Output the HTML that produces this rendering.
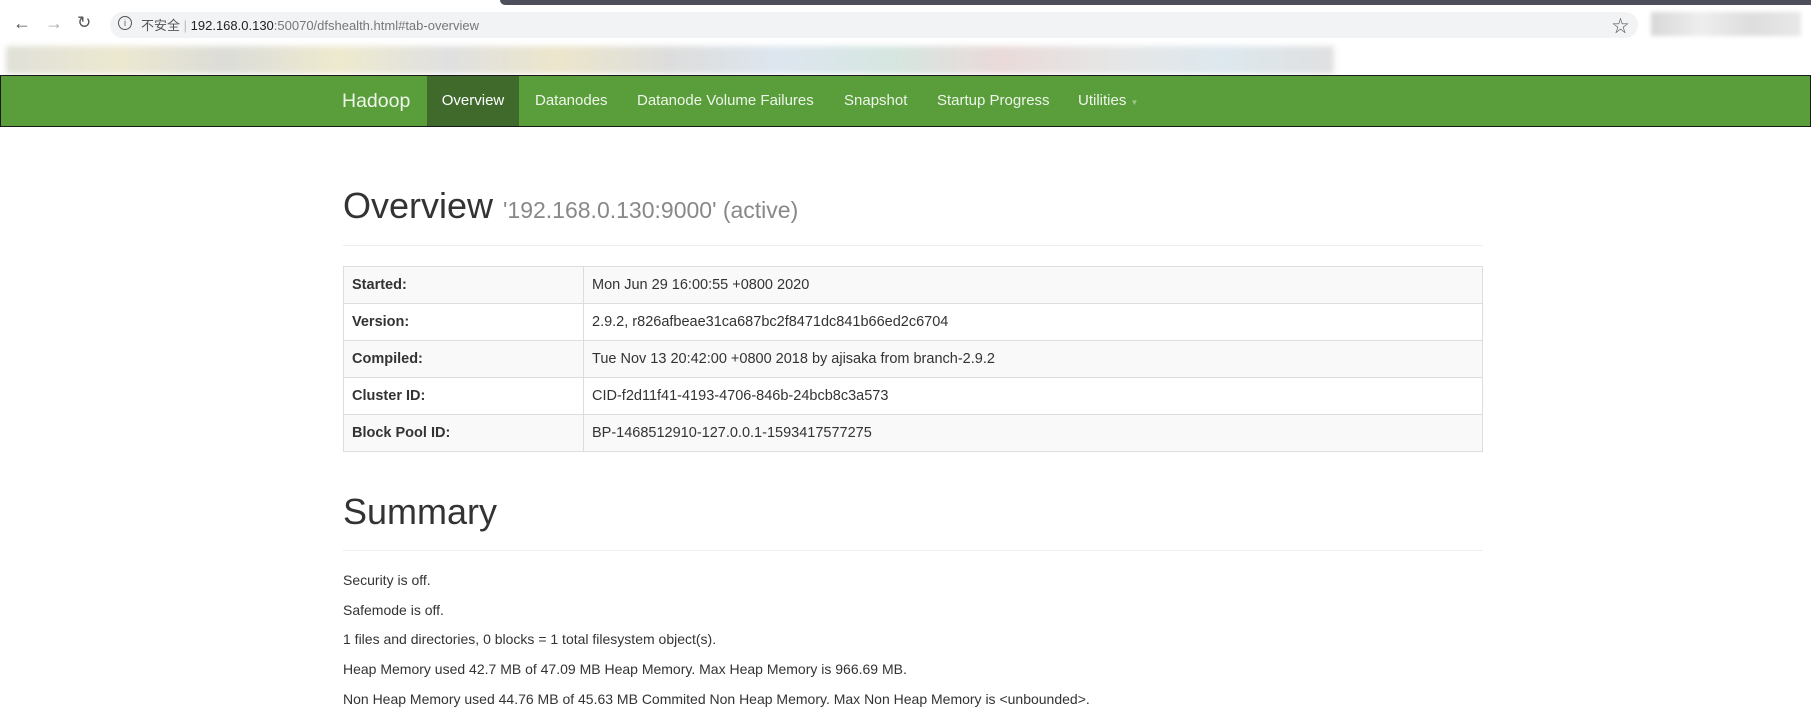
<!DOCTYPE html>
<html><head><meta charset="utf-8"><style>
body{margin:0;width:1811px;height:707px;overflow:hidden;background:#fff;font-family:"Liberation Sans","Noto Sans CJK SC",sans-serif;color:#333;font-size:14px;position:relative}
.abs{position:absolute}
.nav a{position:absolute;top:0;height:50px;line-height:50px;color:#eef5ea;font-size:15px;text-decoration:none;white-space:nowrap}
table{border-collapse:collapse;width:1140px;position:absolute;left:343px;top:266px}
td{border:1px solid #ddd;height:37px;padding:0 8px;font-size:14.5px;box-sizing:border-box}
td:first-child{width:240px;font-weight:bold}
tr:nth-child(odd) td{background:#f9f9f9}
p{position:absolute;left:343px;margin:0;font-size:14px;line-height:20px}
</style></head><body>
<div class="abs" style="left:0;top:0;width:1811px;height:5px;background:#fff"></div>
<div class="abs" style="left:500px;top:0;width:1311px;height:5px;background:#4d505a;border-radius:0 0 0 6px"></div>
<div class="abs" style="left:110px;top:12px;width:1528px;height:26px;background:#f1f3f4;border-radius:13px"></div>
<div class="abs" style="left:13px;top:13px;font-size:18px;color:#555">←</div>
<div class="abs" style="left:45px;top:13px;font-size:18px;color:#aaa">→</div>
<div class="abs" style="left:77px;top:13px;font-size:17px;color:#555">↻</div>
<div class="abs" style="left:118px;top:16px;width:12px;height:12px;border:1.5px solid #555;border-radius:50%;font-size:9px;line-height:12px;text-align:center;color:#555">i</div>
<div class="abs" style="left:141px;top:15px;font-size:13px;color:#555">不安全 <span style="color:#bbb">|</span> <span style="color:#222">192.168.0.130</span><span style="color:#777">:50070/dfshealth.html#tab-overview</span></div>
<div class="abs" style="left:1612px;top:12px;font-size:17px;color:#555">☆</div>
<div class="abs" style="left:1651px;top:12px;width:150px;height:24px;background:linear-gradient(90deg,#d8d8d8,#eee,#ddd,#e8e8e8);filter:blur(2px)"></div>
<div class="abs" style="left:6px;top:46px;width:1328px;height:28px;background:linear-gradient(90deg,#e0e0d8,#ece8d0,#dcdcd8,#eeeacf,#e0e0e0,#ece6cc,#ddd,#dde6ef,#d6e6e0,#eadada,#e6e6e6,#dde8ee,#e0e0e0);filter:blur(3px)"></div>
<div class="abs nav" style="left:0;top:75px;width:1809px;height:50px;background:#5a9e3b;border:1px solid #1a1a1a">
<a style="left:341px;font-size:19.5px">Hadoop</a>
<a style="left:426px;width:92px;background:#3f6a2c;text-align:center;color:#fff">Overview</a>
<a style="left:534px">Datanodes</a>
<a style="left:636px">Datanode Volume Failures</a>
<a style="left:843px">Snapshot</a>
<a style="left:936px">Startup Progress</a>
<a style="left:1077px">Utilities <span style="font-size:8px;color:#9cc58a">▼</span></a>
</div>
<div class="abs" style="left:343px;top:186px;font-size:36px;line-height:40px">Overview <span style="font-size:23px;color:#888">'192.168.0.130:9000' (active)</span></div>
<div class="abs" style="left:343px;top:245px;width:1140px;height:1px;background:#eee"></div>
<table>
<tr><td>Started:</td><td>Mon Jun 29 16:00:55 +0800 2020</td></tr>
<tr><td>Version:</td><td>2.9.2, r826afbeae31ca687bc2f8471dc841b66ed2c6704</td></tr>
<tr><td>Compiled:</td><td>Tue Nov 13 20:42:00 +0800 2018 by ajisaka from branch-2.9.2</td></tr>
<tr><td>Cluster ID:</td><td>CID-f2d11f41-4193-4706-846b-24bcb8c3a573</td></tr>
<tr><td>Block Pool ID:</td><td>BP-1468512910-127.0.0.1-1593417577275</td></tr>
</table>
<div class="abs" style="left:343px;top:492px;font-size:36px;line-height:40px">Summary</div>
<div class="abs" style="left:343px;top:550px;width:1140px;height:1px;background:#eee"></div>
<p style="top:570px">Security is off.</p>
<p style="top:600px">Safemode is off.</p>
<p style="top:629px">1 files and directories, 0 blocks = 1 total filesystem object(s).</p>
<p style="top:659px">Heap Memory used 42.7 MB of 47.09 MB Heap Memory. Max Heap Memory is 966.69 MB.</p>
<p style="top:689px">Non Heap Memory used 44.76 MB of 45.63 MB Commited Non Heap Memory. Max Non Heap Memory is &lt;unbounded&gt;.</p>
</body></html>
